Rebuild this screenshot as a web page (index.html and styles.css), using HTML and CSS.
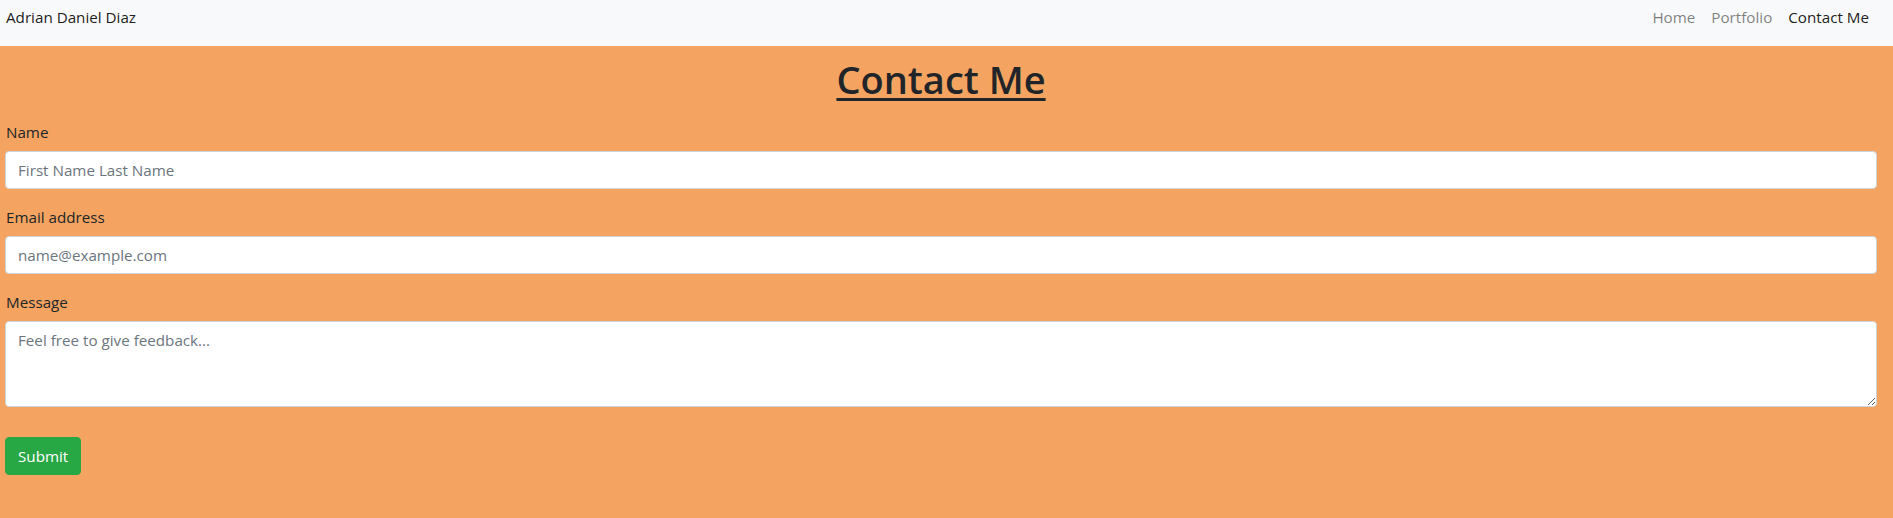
FILE: index.html
```html
<!DOCTYPE html>
<html lang="en">
<head>
<meta charset="utf-8">
<title>Contact Me</title>
<link rel="stylesheet" href="styles.css">
</head>
<body>
<nav class="navbar">
  <a class="brand" href="#">Adrian Daniel Diaz</a>
  <div class="nav-links">
    <a class="nav-link" href="#">Home</a>
    <a class="nav-link" href="#">Portfolio</a>
    <a class="nav-link active" href="#">Contact Me</a>
  </div>
</nav>
<main class="content">
  <h1 class="title">Contact Me</h1>
  <form class="contact-form">
    <div class="field">
      <label class="label" for="name">Name</label>
      <input class="control" id="name" type="text" placeholder="First Name Last Name">
    </div>
    <div class="field">
      <label class="label" for="email">Email address</label>
      <input class="control" id="email" type="email" placeholder="name@example.com">
    </div>
    <div class="field">
      <label class="label" for="message">Message</label>
      <textarea class="control textarea" id="message" rows="3" placeholder="Feel free to give feedback..."></textarea>
    </div>
    <button class="btn-submit" type="button">Submit</button>
  </form>
</main>
</body>
</html>
```
FILE: styles.css
```css
html, body {
  margin: 0;
  padding: 0;
  background: #f4a460;
  font-family: "Open Sans", "Noto Sans", sans-serif;
  font-size: 15.2px;
  color: #212529;
}

.navbar {
  height: 46px;
  box-sizing: border-box;
  background: #f8f9fa;
  display: flex;
  justify-content: space-between;
  align-items: flex-start;
  padding: 5px 16px 0 6px;
  line-height: 24px;
}

.brand {
  color: rgba(0, 0, 0, 0.9);
  text-decoration: none;
}

.nav-links {
  display: flex;
}

.nav-link {
  padding: 0 8px;
  color: rgba(0, 0, 0, 0.5);
  text-decoration: none;
}

.nav-link.active {
  color: rgba(0, 0, 0, 0.9);
}

.content {
  padding: 0 16px 0 5px;
}

.title {
  margin: 9px 0 17px;
  text-align: center;
  font-size: 38px;
  font-weight: 600;
  line-height: 48px;
  text-decoration: underline;
  text-decoration-thickness: 3px;
  text-underline-offset: 4px;
}

.contact-form {
  margin: 0;
}

.field {
  margin-bottom: 16px;
}

.label {
  display: inline-block;
  margin-bottom: 7px;
  line-height: 24px;
  padding-left: 1px;
}

.control {
  display: block;
  width: 100%;
  box-sizing: border-box;
  height: 38px;
  padding: 6px 12px;
  font-family: inherit;
  font-size: 15.2px;
  line-height: 24px;
  color: #495057;
  background: #fff;
  border: 1px solid #ced4da;
  border-radius: 4px;
  margin: 0;
}

.control::placeholder {
  color: #6c757d;
}

.textarea {
  height: 86px;
  resize: vertical;
}

.btn-submit {
  margin-top: 14px;
  height: 38px;
  padding: 6px 12px;
  font-family: inherit;
  font-size: 15.2px;
  line-height: 24px;
  color: #fff;
  background: #28a745;
  border: 1px solid #28a745;
  border-radius: 4px;
}
```
